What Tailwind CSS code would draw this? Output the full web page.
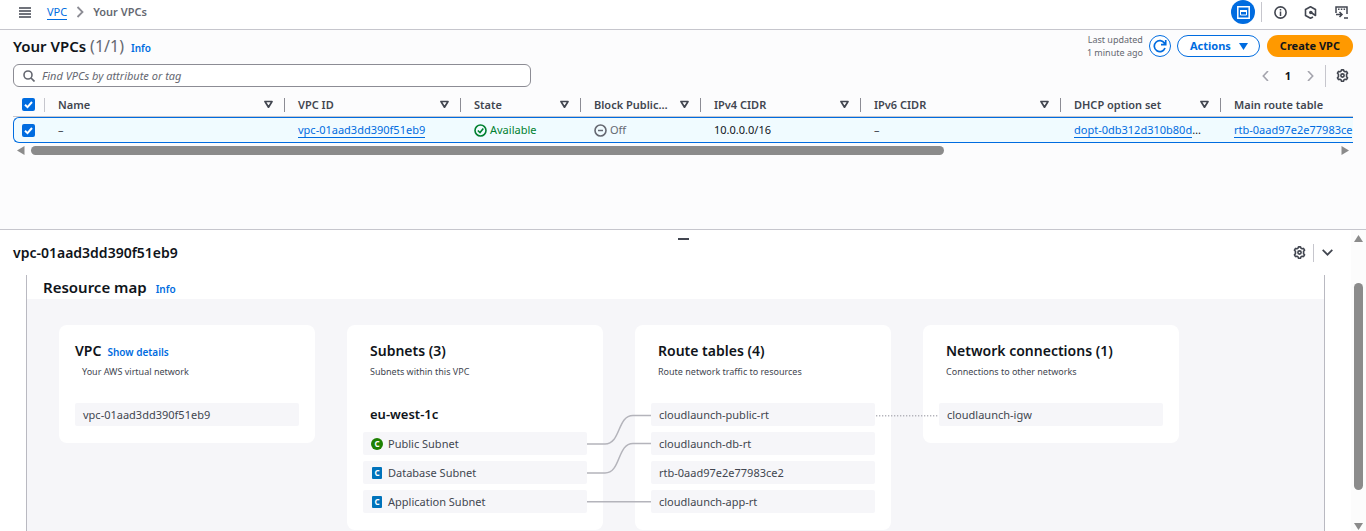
<!DOCTYPE html>
<html lang="en">
<head>
<meta charset="utf-8">
<title>Your VPCs</title>
<script src="https://cdn.jsdelivr.net/npm/@tailwindcss/browser@4"></script>
</head>
<body class="flex h-screen flex-col overflow-hidden bg-[#fcfcfd] font-['Noto_Sans','Open_Sans',sans-serif] text-[11px] leading-4 text-[#0f141a]">
<svg class="hidden">
  <symbol id="gear" viewBox="0 0 16 16"><path d="M6.300 2.600 6.800 1h2.400l.5 1.600 1.500.8 1.700-.4 1.300 2.100-1.200 1.300v3.200l1.200 1.300-1.300 2.100-1.700-.4-1.500.8L9.200 15H6.800l-.5-1.600-1.500-.8-1.700.4-1.300-2.100L3 9.600V6.400L1.800 5.100 3.100 3l1.700.4z" fill="none" stroke="currentColor" stroke-width="2" stroke-linejoin="round"/><circle cx="8" cy="8" r="2" fill="none" stroke="currentColor" stroke-width="2"/></symbol>
  <symbol id="caret" viewBox="0 0 9 9"><path d="M1 1.500h7L4.500 7.200z" fill="none" stroke="#424650" stroke-width="1.700" stroke-linejoin="round"/></symbol>
  <symbol id="tick" viewBox="0 0 13 13"><path d="m3 6.700 2.500 2.400L10 4" fill="none" stroke="#fff" stroke-width="2"/></symbol>
</svg>

<header class="flex h-[30px] flex-none items-center border-b border-[#c6c6cd] bg-white pr-[18px] pb-[5px] pl-[19px]">
  <button aria-label="Open navigation" class="flex h-5 w-3 items-center text-[#424650]"><svg class="h-3 w-3" viewBox="0 0 12 12"><path d="M0 2h12M0 5h12M0 8h12M0 11h12" stroke="currentColor" stroke-width="1.500"/></svg></button>
  <nav aria-label="Breadcrumb" class="ml-4 flex items-center">
    <a href="#" class="border-b border-[#006ce0] leading-[14px] text-[#006ce0]">VPC</a>
    <svg class="mx-[9px] h-3 w-2" viewBox="0 0 8 12"><path d="m1.500 1 5 5-5 5" fill="none" stroke="#8c8c94" stroke-width="1.800"/></svg>
    <span class="font-semibold text-[#656871]">Your VPCs</span>
  </nav>
  <div class="ml-auto flex items-center">
    <button aria-label="Split panel" class="flex h-6 w-6 items-center justify-center rounded-full bg-[#006ce0]"><svg class="h-[13px] w-[13px]" viewBox="0 0 13 13"><path d="M.8.8h11.400v11.400H.8z" fill="none" stroke="#fff" stroke-width="1.500"/><path d="M3.500 4.500h6v4.500h-6z" fill="none" stroke="#fff" stroke-width="1"/><path d="M3 4h7v2H3z" fill="#fff"/></svg></button>
    <span class="ml-[6px] h-5 w-px bg-[#c6c6cd]"></span>
    <button aria-label="Info" class="ml-3 text-[#424650]"><svg class="h-[13px] w-[13px]" viewBox="0 0 13 13"><circle cx="6.500" cy="6.500" r="5.600" fill="none" stroke="currentColor" stroke-width="1.600"/><path d="M6.500 5.500V10M6.500 3v1.500" stroke="currentColor" stroke-width="1.500"/></svg></button>
    <button aria-label="Assistant" class="ml-[17px] text-[#424650]"><svg class="h-[13px] w-[13px]" viewBox="0 0 13 13"><path d="M9 11 6.500 12.200 1.500 9.500v-6l5-2.700 5 2.700v6L7 6.500" fill="none" stroke="currentColor" stroke-width="1.600" stroke-linejoin="round"/><circle cx="6.800" cy="6.500" r="1.800" fill="currentColor"/></svg></button>
    <button aria-label="CloudShell" class="ml-[18px] text-[#424650]"><svg class="h-[13px] w-[13px]" viewBox="0 0 13 13"><path d="M1 7V1h11v7M3 3.200h1.500M5.800 3.200h1.500M8.600 3.200h1.500" fill="none" stroke="currentColor" stroke-width="1.500"/><path d="M1 8.500h6M4.500 6 7 8.500 4.500 11M9 12h4" fill="none" stroke="currentColor" stroke-width="1.500"/></svg></button>
  </div>
</header>

<main class="flex-none px-[13px] pt-[3px] pb-[74px]">
  <div class="flex items-center">
    <h1 class="text-[15px] leading-[22px] font-semibold">Your VPCs <span class="text-[16px] font-normal text-[#656871]">(1/1)</span></h1>
    <a href="#" class="ml-[7px] pt-[3px] text-[10px] font-semibold text-[#006ce0]">Info</a>
    <p class="ml-auto mr-[6px] text-right text-[9px] leading-[13px] text-[#656871]">Last updated<br>1 minute ago</p>
    <button aria-label="Refresh" class="flex h-[22px] w-[22px] items-center justify-center rounded-full border border-[#006ce0] bg-white text-[#006ce0]"><svg class="h-[14px] w-[14px]" viewBox="0 0 14 14"><path d="M12 9A5.500 5.500 0 1 1 11.500 4.300L12.500 5.500M12.700 1v4.700H8" fill="none" stroke="currentColor" stroke-width="1.700"/></svg></button>
    <button class="ml-[6px] flex h-[22px] items-center gap-2 rounded-full border border-[#006ce0] bg-white pr-[11px] pl-3 font-bold text-[#006ce0]">Actions<svg class="h-[7px] w-[9px]" viewBox="0 0 9 7"><path d="M0 0h9L4.500 7z" fill="currentColor"/></svg></button>
    <button class="ml-[7px] h-[22px] rounded-full bg-[#ff9900] px-[13px] font-bold">Create VPC</button>
  </div>
  <div class="mt-[5px] flex items-center">
    <label class="flex h-[23px] w-[518px] items-center gap-[7px] rounded-md border border-[#8c8c94] bg-white px-[9px]">
      <svg class="h-3 w-3 flex-none" viewBox="0 0 12 12"><circle cx="5" cy="5" r="4" fill="none" stroke="#656871" stroke-width="1.600"/><path d="m8 8 3.500 3.500" stroke="#656871" stroke-width="1.700"/></svg>
      <input type="text" aria-label="Find VPCs" placeholder="Find VPCs by attribute or tag" class="w-full bg-transparent outline-none placeholder:text-[#656871] placeholder:italic">
    </label>
    <div class="ml-auto flex items-center">
      <button aria-label="Previous page"><svg class="h-[10px] w-[7px]" viewBox="0 0 7 10"><path d="M6 0 1.300 5 6 10" fill="none" stroke="#a4a4ad" stroke-width="1.600"/></svg></button>
      <button class="w-[38px] text-center font-bold">1</button>
      <button aria-label="Next page"><svg class="h-[10px] w-[7px]" viewBox="0 0 7 10"><path d="m1 0 4.700 5L1 10" fill="none" stroke="#a4a4ad" stroke-width="1.600"/></svg></button>
      <span class="ml-[11px] h-[22px] w-px bg-[#c6c6cd]"></span>
      <button aria-label="Preferences" class="mr-[4px] ml-[10px] text-[#424650]"><svg class="h-[13px] w-[13px]"><use href="#gear"/></svg></button>
    </div>
  </div>

  <div class="mt-[6px] overflow-hidden">
    <table class="w-[1940px] table-fixed border-separate border-spacing-0 text-left">
      <colgroup><col class="w-8"><col class="w-[240px]"><col class="w-[176px]"><col class="w-[120px]"><col class="w-[120px]"><col class="w-[160px]"><col class="w-[200px]"><col class="w-[160px]"><col></colgroup>
      <thead class="text-[#424650]">
        <tr class="h-6">
          <th class="border-b border-[#c6c6cd] p-0"><div class="flex h-[14px] items-center border-r border-[#c6c6cd] pl-[9px]"><label class="relative block h-[13px] w-[13px]"><input type="checkbox" checked aria-label="Select all" class="block h-[13px] w-[13px] appearance-none rounded-xs bg-[#006ce0]"><svg class="pointer-events-none absolute inset-0 h-[13px] w-[13px]"><use href="#tick"/></svg></label></div></th>
          <th class="border-b border-[#c6c6cd] p-0 font-semibold"><div class="flex h-[14px] items-center justify-between border-r border-[#8c8c94] pr-[11px] pl-[13px]">Name<svg class="h-[9px] w-[9px]"><use href="#caret"/></svg></div></th>
          <th class="border-b border-[#c6c6cd] p-0 font-semibold"><div class="flex h-[14px] items-center justify-between border-r border-[#8c8c94] pr-[11px] pl-[13px]">VPC ID<svg class="h-[9px] w-[9px]"><use href="#caret"/></svg></div></th>
          <th class="border-b border-[#c6c6cd] p-0 font-semibold"><div class="flex h-[14px] items-center justify-between border-r border-[#8c8c94] pr-[11px] pl-[13px]">State<svg class="h-[9px] w-[9px]"><use href="#caret"/></svg></div></th>
          <th class="border-b border-[#c6c6cd] p-0 font-semibold"><div class="flex h-[14px] items-center justify-between border-r border-[#8c8c94] pr-[11px] pl-[13px] whitespace-nowrap">Block Public…<svg class="h-[9px] w-[9px] flex-none"><use href="#caret"/></svg></div></th>
          <th class="border-b border-[#c6c6cd] p-0 font-semibold"><div class="flex h-[14px] items-center justify-between border-r border-[#8c8c94] pr-[11px] pl-[13px]">IPv4 CIDR<svg class="h-[9px] w-[9px]"><use href="#caret"/></svg></div></th>
          <th class="border-b border-[#c6c6cd] p-0 font-semibold"><div class="flex h-[14px] items-center justify-between border-r border-[#8c8c94] pr-[11px] pl-[13px]">IPv6 CIDR<svg class="h-[9px] w-[9px]"><use href="#caret"/></svg></div></th>
          <th class="border-b border-[#c6c6cd] p-0 font-semibold"><div class="flex h-[14px] items-center justify-between border-r border-[#8c8c94] pr-[11px] pl-[13px]">DHCP option set<svg class="h-[9px] w-[9px]"><use href="#caret"/></svg></div></th>
          <th class="border-b border-[#c6c6cd] p-0 pl-[13px] font-semibold">Main route table</th>
        </tr>
      </thead>
      <tbody>
        <tr class="h-[26px]">
          <td class="rounded-l-md border-y border-l border-[#006ce0] bg-[#f0fbff] p-0 pl-2"><label class="relative block h-[13px] w-[13px]"><input type="checkbox" checked aria-label="Select vpc-01aad3dd390f51eb9" class="block h-[13px] w-[13px] appearance-none rounded-xs bg-[#006ce0]"><svg class="pointer-events-none absolute inset-0 h-[13px] w-[13px]"><use href="#tick"/></svg></label></td>
          <td class="border-y border-[#006ce0] bg-[#f0fbff] p-0 pl-[13px] text-[#424650]">–</td>
          <td class="border-y border-[#006ce0] bg-[#f0fbff] p-0 pl-[13px]"><a href="#" class="inline-block border-b border-[#006ce0] leading-[14px] text-[#006ce0]">vpc-01aad3dd390f51eb9</a></td>
          <td class="border-y border-[#006ce0] bg-[#f0fbff] p-0 pl-[13px] text-[#00802f]"><span class="flex items-center gap-[3px]"><svg class="h-[13px] w-[13px]" viewBox="0 0 13 13"><circle cx="6.500" cy="6.500" r="5.500" fill="none" stroke="currentColor" stroke-width="1.600"/><path d="M3.800 6.500 6 8.500l3.300-4" fill="none" stroke="currentColor" stroke-width="1.600"/></svg>Available</span></td>
          <td class="border-y border-[#006ce0] bg-[#f0fbff] p-0 pl-[13px] text-[#656871]"><span class="flex items-center gap-[3px]"><svg class="h-[13px] w-[13px]" viewBox="0 0 13 13"><circle cx="6.500" cy="6.500" r="5.500" fill="none" stroke="currentColor" stroke-width="1.600"/><path d="M4 6.500h5" stroke="currentColor" stroke-width="1.500"/></svg>Off</span></td>
          <td class="border-y border-[#006ce0] bg-[#f0fbff] p-0 pl-[13px]">10.0.0.0/16</td>
          <td class="border-y border-[#006ce0] bg-[#f0fbff] p-0 pl-[13px] text-[#424650]">–</td>
          <td class="border-y border-[#006ce0] bg-[#f0fbff] p-0 pl-[13px] whitespace-nowrap"><a href="#" class="inline-block border-b border-[#006ce0] leading-[14px] text-[#006ce0]">dopt-0db312d310b80d</a>…</td>
          <td class="border-y border-[#006ce0] bg-[#f0fbff] p-0 pl-[13px]"><a href="#" class="inline-block border-b border-[#006ce0] leading-[14px] text-[#006ce0]">rtb-0aad97e2e77983ce</a></td>
        </tr>
      </tbody>
    </table>
  </div>
  <div class="mt-[3px] flex h-[9px] items-center px-1">
    <svg class="h-[9px] w-[8px] flex-none" viewBox="0 0 8 9"><path d="M7.500 0v9L0 4.500z" fill="#8b8b8b"/></svg>
    <div class="mx-[6px] flex-1"><div class="h-[9px] w-[70%] rounded-full bg-[#8b8b8b]"></div></div>
    <svg class="h-[9px] w-[8px] flex-none" viewBox="0 0 8 9"><path d="M.5 0v9L8 4.500z" fill="#8b8b8b"/></svg>
  </div>
</main>

<section aria-label="VPC details" class="flex min-h-0 flex-1 border-t border-[#c6c6cd] bg-white">
  <div class="flex min-w-0 flex-1 flex-col overflow-hidden">
    <div class="relative flex h-[45px] flex-none items-center pr-[18px] pl-[13px]">
      <button aria-label="Resize panel" class="absolute top-[8px] left-[678px] h-[2px] w-[11px] bg-[#424650]"></button>
      <h2 class="text-[14px] font-semibold">vpc-01aad3dd390f51eb9</h2>
      <button aria-label="Panel preferences" class="ml-auto text-[#424650]"><svg class="h-[13px] w-[13px]"><use href="#gear"/></svg></button>
      <span class="ml-[7px] h-[18px] w-px bg-[#c6c6cd]"></span>
      <button aria-label="Close panel" class="ml-2 text-[#424650]"><svg class="h-[7px] w-[11px]" viewBox="0 0 11 7"><path d="m.7.8 4.800 4.900L10.300.8" fill="none" stroke="currentColor" stroke-width="1.700"/></svg></button>
    </div>
    <div class="mr-[26px] ml-[26px] flex min-h-0 flex-1 flex-col border-x border-[#b9b9c1]">
      <div class="flex h-6 flex-none items-center gap-[9px] pl-4"><h3 class="text-[15px] font-semibold">Resource map</h3><a href="#" class="pt-[3px] text-[10px] font-semibold text-[#006ce0]">Info</a></div>
      <div class="min-h-0 flex-1 bg-[#f6f6f9] pt-[26px] pl-8 text-[#424650]">
        <div class="relative flex w-[1120px] items-start gap-8">
          <article class="w-64 rounded-lg bg-white px-4 pt-[18px] pb-[17px]">
            <div class="flex h-4 items-baseline gap-[6px]"><h4 class="text-[14px] leading-4 font-semibold text-[#0f141a]">VPC</h4><a href="#" class="text-[10px] leading-4 font-semibold text-[#006ce0]">Show details</a></div>
            <p class="mt-[5px] pl-[7px] text-[9px] leading-4">Your AWS virtual network</p>
            <ul class="mt-[23px]"><li class="flex h-[23px] items-center rounded-xs bg-[#f6f6f9] px-2">vpc-01aad3dd390f51eb9</li></ul>
          </article>
          <article class="w-64 rounded-lg bg-white px-4 pt-[18px] pb-[17px]">
            <h4 class="pl-[7px] text-[14px] leading-4 font-semibold text-[#0f141a]">Subnets (3)</h4>
            <p class="mt-[5px] pl-[7px] text-[9px] leading-4">Subnets within this VPC</p>
            <h5 class="mt-[23px] h-[23px] pl-[7px] text-[13px] leading-[23px] font-semibold text-[#0f141a]">eu-west-1c</h5>
            <ul class="mt-[6px] flex flex-col gap-[6px]">
              <li class="flex h-[23px] items-center gap-[5px] rounded-xs bg-[#f6f6f9] px-2"><span class="flex h-3 w-3 items-center justify-center rounded-full bg-[#1d8102] text-[8px] font-bold text-white">C</span>Public Subnet</li>
              <li class="flex h-[23px] items-center gap-[5px] rounded-xs bg-[#f6f6f9] px-2"><span class="mx-px flex h-3 w-[10px] items-center justify-center rounded-[1px] bg-[#0073bb] text-[8px] font-bold text-white">C</span>Database Subnet</li>
              <li class="flex h-[23px] items-center gap-[5px] rounded-xs bg-[#f6f6f9] px-2"><span class="mx-px flex h-3 w-[10px] items-center justify-center rounded-[1px] bg-[#0073bb] text-[8px] font-bold text-white">C</span>Application Subnet</li>
            </ul>
          </article>
          <article class="w-64 rounded-lg bg-white px-4 pt-[18px] pb-[17px]">
            <h4 class="pl-[7px] text-[14px] leading-4 font-semibold text-[#0f141a]">Route tables (4)</h4>
            <p class="mt-[5px] pl-[7px] text-[9px] leading-4">Route network traffic to resources</p>
            <ul class="mt-[23px] flex flex-col gap-[6px]">
              <li class="flex h-[23px] items-center rounded-xs bg-[#f6f6f9] px-2">cloudlaunch-public-rt</li>
              <li class="flex h-[23px] items-center rounded-xs bg-[#f6f6f9] px-2">cloudlaunch-db-rt</li>
              <li class="flex h-[23px] items-center rounded-xs bg-[#f6f6f9] px-2">rtb-0aad97e2e77983ce2</li>
              <li class="flex h-[23px] items-center rounded-xs bg-[#f6f6f9] px-2">cloudlaunch-app-rt</li>
            </ul>
          </article>
          <article class="w-64 rounded-lg bg-white px-4 pt-[18px] pb-[17px]">
            <h4 class="pl-[7px] text-[14px] leading-4 font-semibold text-[#0f141a]">Network connections (1)</h4>
            <p class="mt-[5px] pl-[7px] text-[9px] leading-4">Connections to other networks</p>
            <ul class="mt-[23px]"><li class="flex h-[23px] items-center rounded-xs bg-[#f6f6f9] px-2">cloudlaunch-igw</li></ul>
          </article>
          <svg class="pointer-events-none absolute top-0 left-0 h-[205px] w-[1120px]" viewBox="0 0 1120 205" fill="none" stroke="#b4b4bb" stroke-width="1.500">
            <path d="M528 119h18c16 0 12-28.500 28-28.500h18"/>
            <path d="M528 148h18c16 0 12-29.500 28-29.500h18"/>
            <path d="M528 176.700h64"/>
            <path d="M817 90.700h63" stroke-dasharray="1.300 1.700"/>
          </svg>
        </div>
      </div>
    </div>
  </div>
  <div aria-hidden="true" class="flex w-[15px] flex-none flex-col items-center bg-[#fcfcfc] pt-[5px] pb-px">
    <svg class="h-[7px] w-[9px] flex-none" viewBox="0 0 9 7"><path d="M0 7h9L4.500 0z" fill="#8b8b8b"/></svg>
    <div class="flex w-[9px] flex-1 flex-col pt-[41px] pb-[33px]"><div class="flex-1 rounded-full bg-[#8b8b8b]"></div></div>
    <svg class="h-[7px] w-[9px] flex-none" viewBox="0 0 9 7"><path d="M0 0h9L4.500 7z" fill="#8b8b8b"/></svg>
  </div>
</section>
</body>
</html>
